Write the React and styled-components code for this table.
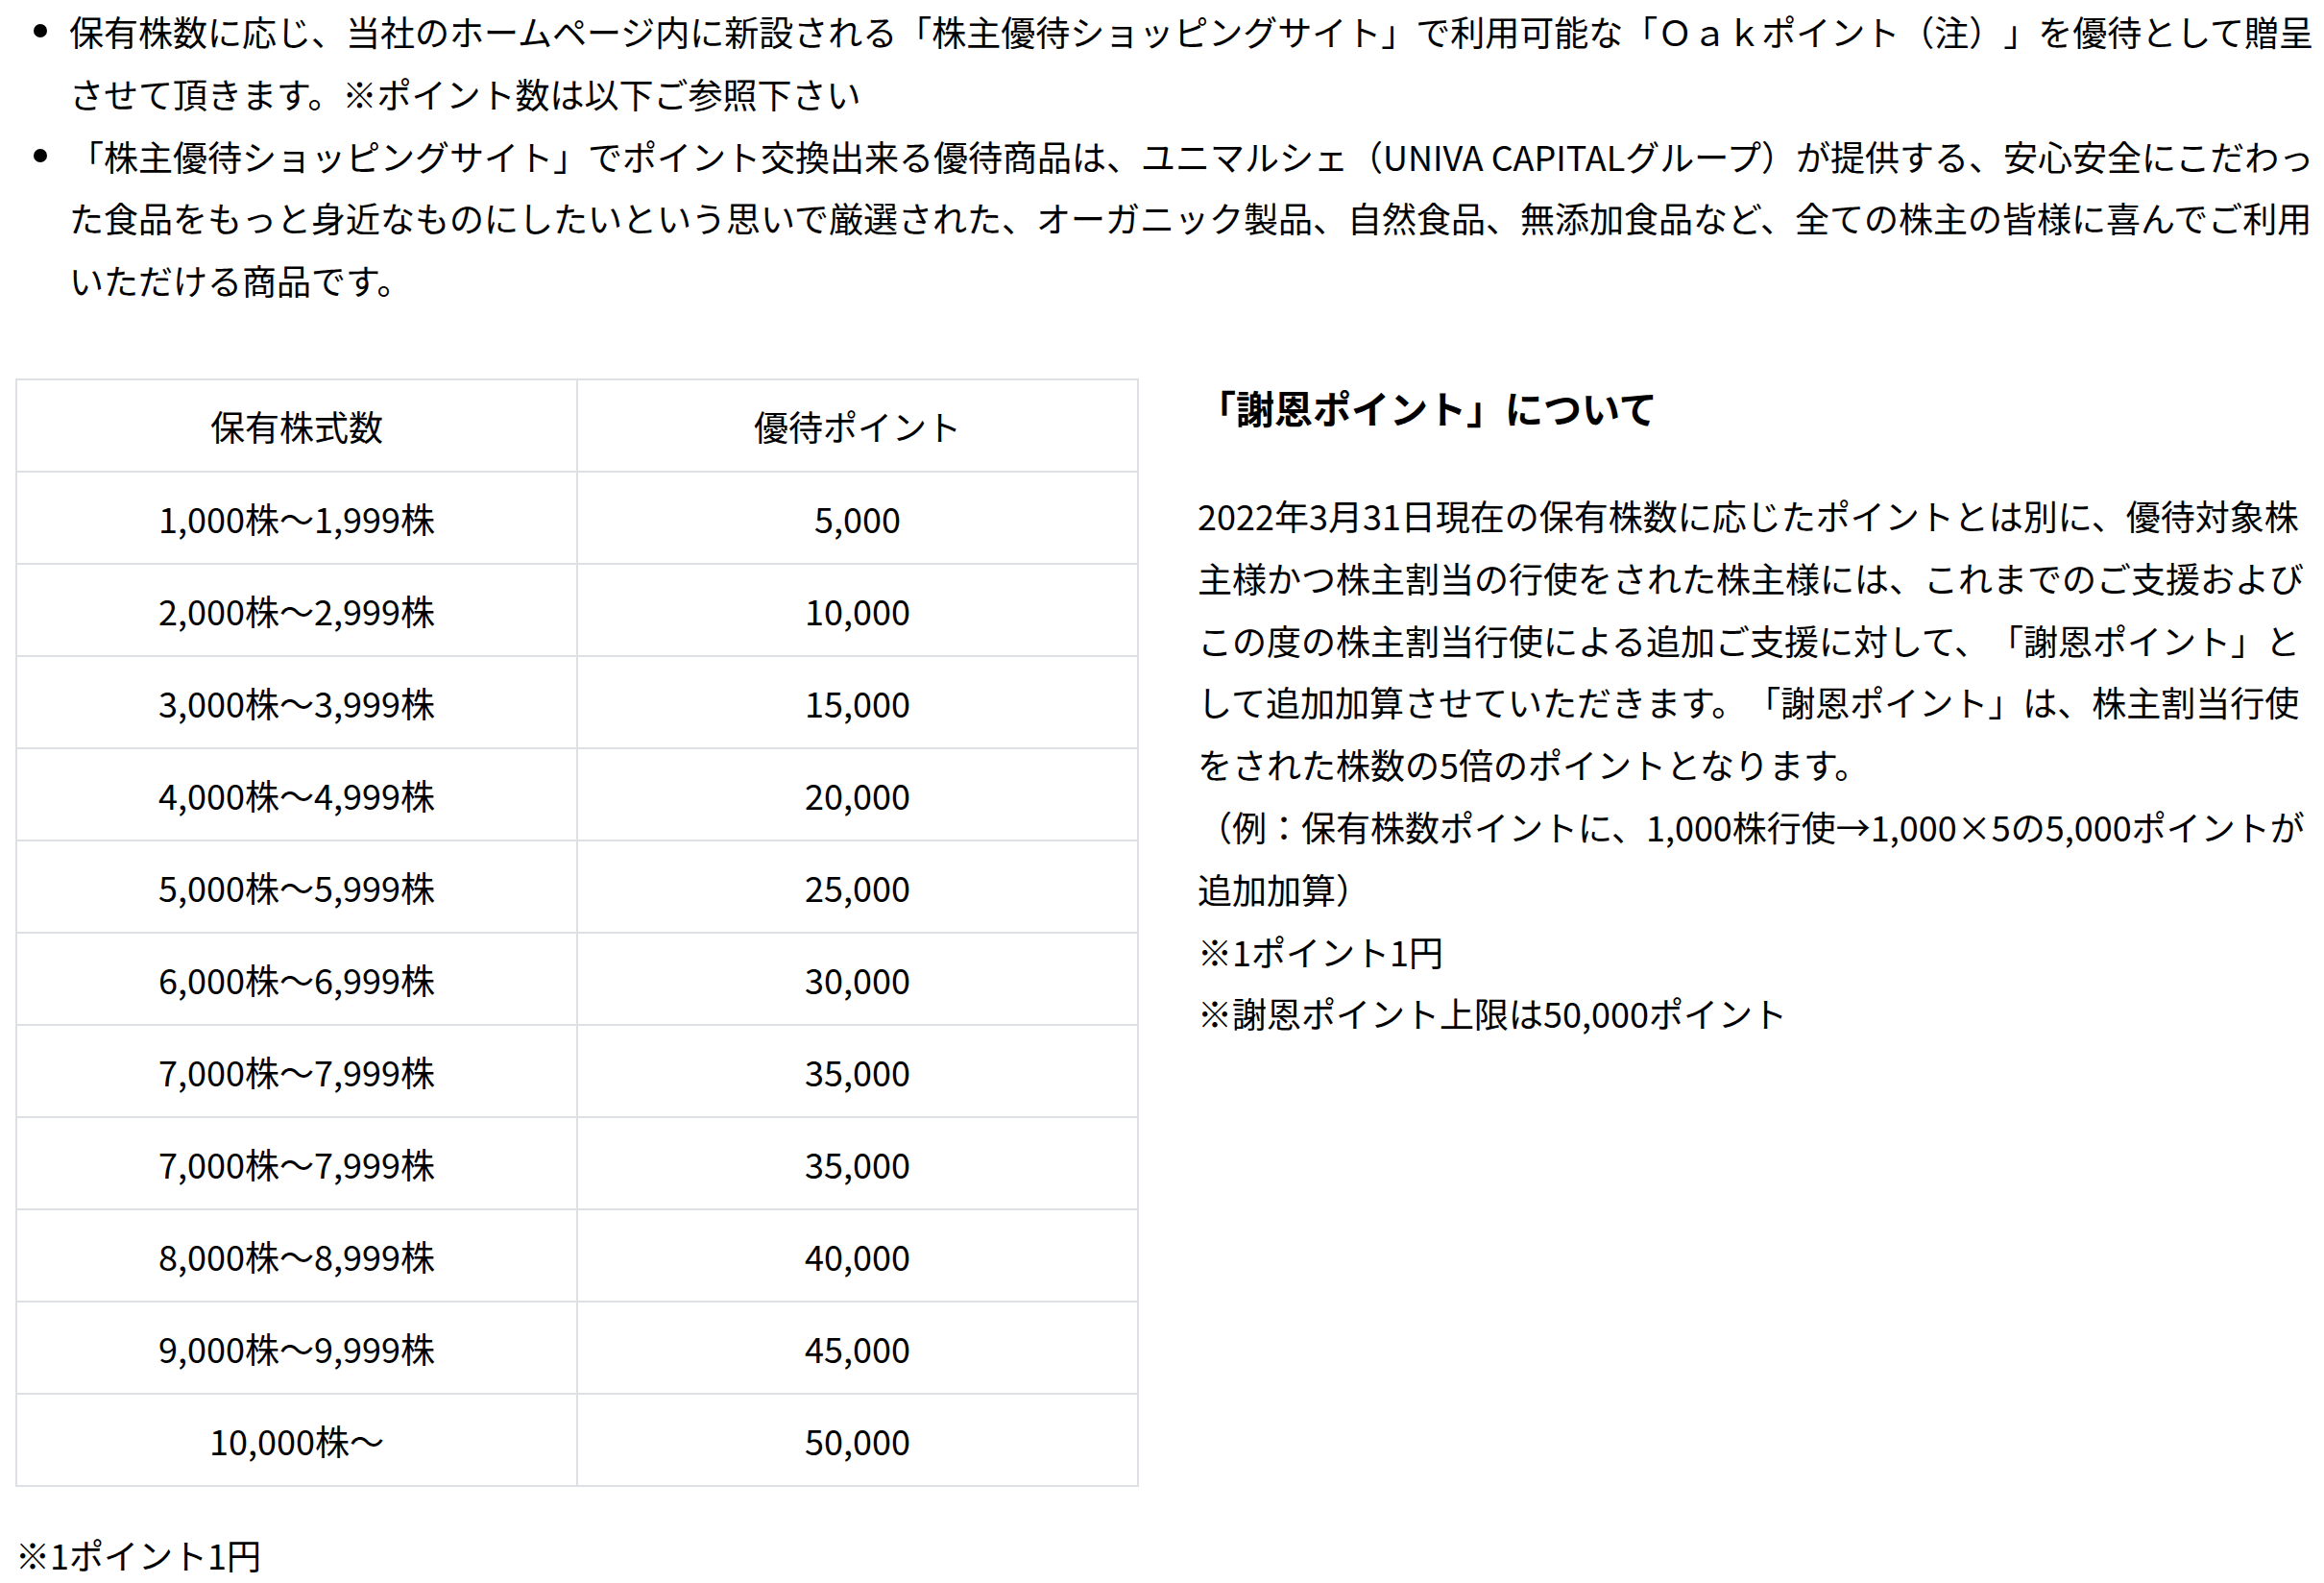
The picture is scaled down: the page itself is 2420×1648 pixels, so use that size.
import styled, { createGlobalStyle } from "styled-components";

const GlobalStyle = createGlobalStyle`
	html {
		overflow: hidden;
	}
	body {
		margin: 0;
		background: #fff;
		color: #000;
		font-family: "Noto Sans CJK JP", "Noto Sans", sans-serif;
		text-spacing-trim: space-all;
	}
`;

const Page = styled.div`
	width: 2420px;
	font-size: 36px;
	line-height: 1.8;
`;

const BulletList = styled.ul`
	list-style: none;
	margin: 0;
	padding: 0;
`;

const BulletItem = styled.li`
	display: grid;
	grid-template-columns: 72px 1fr;
`;

const Dot = styled.span`
	width: 14px;
	height: 14px;
	margin: 25px 0 0 35px;
	border-radius: 50%;
	background: #000;
`;

const Section = styled.div`
	display: grid;
	grid-template-columns: 1170px 1fr;
	column-gap: 61px;
	align-items: start;
	margin-top: 70px;
	padding-left: 16px;
`;

const Table = styled.table`
	width: 1170px;
	border-collapse: separate;
	border-spacing: 0;
	border-top: 2px solid #dde0e4;
	border-left: 2px solid #dde0e4;
	table-layout: fixed;
`;

const Cell = styled.td`
	padding: 15px 0;
	line-height: 64px;
	text-align: center;
	font-weight: 400;
	border-right: 2px solid #dde0e4;
	border-bottom: 2px solid #dde0e4;
`;

const Side = styled.div`
	display: flex;
	flex-direction: column;
`;

const Heading = styled.h3`
	margin: 0 0 50px;
	font-size: 40px;
	font-weight: 700;
	line-height: 60px;
`;

const Body = styled.p`
	margin: 0;
`;

const Note = styled.p`
	margin: 38px 0 0;
	padding-left: 16px;
`;

const rows = [
	["1,000株〜1,999株", "5,000"],
	["2,000株〜2,999株", "10,000"],
	["3,000株〜3,999株", "15,000"],
	["4,000株〜4,999株", "20,000"],
	["5,000株〜5,999株", "25,000"],
	["6,000株〜6,999株", "30,000"],
	["7,000株〜7,999株", "35,000"],
	["7,000株〜7,999株", "35,000"],
	["8,000株〜8,999株", "40,000"],
	["9,000株〜9,999株", "45,000"],
	["10,000株〜", "50,000"],
];

const App = () => {
	return (
		<Page>
			<GlobalStyle />
			<BulletList>
				<BulletItem>
					<Dot />
					<span>
						保有株数に応じ、当社のホームページ内に新設される「株主優待ショッピングサイト」で利用可能な「Ｏａｋポイント（注）」を優待として贈呈させて頂きます。※ポイント数は以下ご参照下さい
					</span>
				</BulletItem>
				<BulletItem>
					<Dot />
					<span>
						「株主優待ショッピングサイト」でポイント交換出来る優待商品は、ユニマルシェ（UNIVA CAPITALグループ）が提供する、安心安全にこだわった食品をもっと身近なものにしたいという思いで厳選された、オーガニック製品、自然食品、無添加食品など、全ての株主の皆様に喜んでご利用いただける商品です。
					</span>
				</BulletItem>
			</BulletList>

			<Section>
				<Table>
					<thead>
						<tr>
							<Cell as="th">保有株式数</Cell>
							<Cell as="th">優待ポイント</Cell>
						</tr>
					</thead>
					<tbody>
						{rows.map(([shares, points], i) => (
							<tr key={i}>
								<Cell>{shares}</Cell>
								<Cell>{points}</Cell>
							</tr>
						))}
					</tbody>
				</Table>
				<Side>
					<Heading>「謝恩ポイント」について</Heading>
					<Body>
						2022年3月31日現在の保有株数に応じたポイントとは別に、優待対象株主様かつ株主割当の行使をされた株主様には、これまでのご支援およびこの度の株主割当行使による追加ご支援に対して、「謝恩ポイント」として追加加算させていただきます。「謝恩ポイント」は、株主割当行使をされた株数の5倍のポイントとなります。
						<br />
						（例：保有株数ポイントに、1,000株行使→1,000×5の5,000ポイントが追加加算）
						<br />
						※1ポイント1円
						<br />
						※謝恩ポイント上限は50,000ポイント
					</Body>
				</Side>
			</Section>

			<Note>※1ポイント1円</Note>
		</Page>
	);
};

export default App;
